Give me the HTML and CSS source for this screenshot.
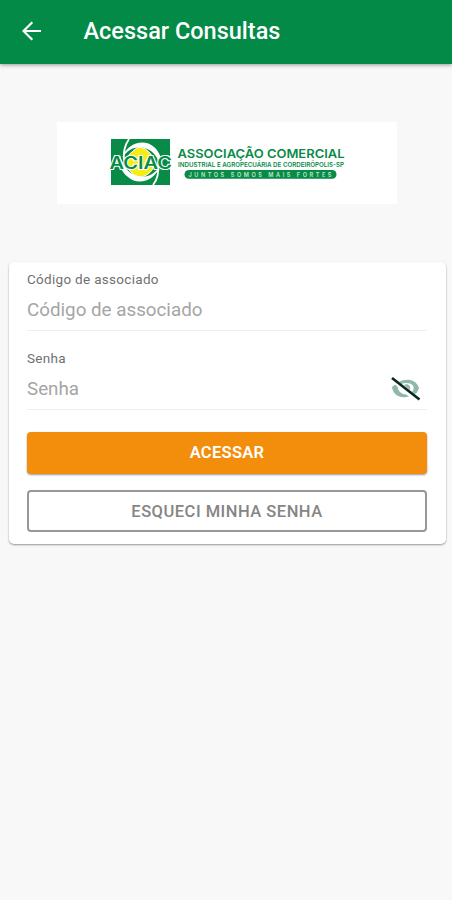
FILE: index.html
```
<!DOCTYPE html>
<html lang="pt-BR">

<head>
    <meta charset="utf-8">
    <title>Acessar Consultas</title>
    <link rel="stylesheet" href="styles.css">
</head>

<body>
    <header class="toolbar">
        <a class="back" href="#" aria-label="Voltar">
            <svg width="20" height="20" viewBox="0 0 20 20">
                <path d="M19 10H2M10.3 1.2L1.5 10l8.8 8.8" />
            </svg>
        </a>
        <h1>Acessar Consultas</h1>
    </header>

    <main>
        <div class="logo">
            <svg width="340" height="82" viewBox="57 122 340 82">
                <rect class="green" x="111" y="139" width="59" height="46" />
                <path class="yellow" d="M140 147Q146 148 150 153Q155 158 155 163Q153 171 148 174Q143 178 139 177Q133 176 130 171Q125 166 126 161Q128 154 133 151Q137 147 140 147z" />
                <path class="swirl" d="M129 139C125 145 123 152 124 160M153 185C158 179 159 172 158 164" />
                <path class="crescent" d="M122 158C127 143 144 138 154 147C160 152 163 161 161 169C158 158 154 151 146 148.500C137 145 128 149 122 158z" />
                <path class="crescent" d="M160 166C155 181 138 186 128 177C121 172 118 163 120 155C123 166 128 173 136 175.500C145 179 154 175 160 166z" />
                <text class="acronym" x="109.500" y="168.500" textLength="62.500" lengthAdjust="spacingAndGlyphs">ACIAC</text>
                <text class="name" x="177.500" y="158" textLength="167" lengthAdjust="spacingAndGlyphs">ASSOCIAÇÃO COMERCIAL</text>
                <text class="detail" x="178" y="167" textLength="166" lengthAdjust="spacingAndGlyphs">INDUSTRIAL E AGROPECUÁRIA DE CORDEIRÓPOLIS-SP</text>
                <rect class="green" x="184.500" y="170" width="152" height="8.800" rx="4.400" />
                <text class="motto" x="188.500" y="176.500" textLength="143" lengthAdjust="spacing">JUNTOS SOMOS MAIS FORTES</text>
            </svg>
        </div>

        <form class="card">
            <label for="codigo">Código de associado</label>
            <div class="field">
                <input type="text" id="codigo" placeholder="Código de associado">
            </div>

            <label for="senha">Senha</label>
            <div class="field">
                <input type="password" id="senha" placeholder="Senha">
                <svg class="eye" width="32" height="26" viewBox="0 0 32 26">
                    <path d="M2 11C3 19 10 23 19 20.500L16 18.500C11 18 8 15 7.500 10.500L5 8.500z" />
                    <path d="M9 6C16 2 26 3 29 12C28 15 27 17 25 18L22 16C25 13 24 9 20 7.500C17 6.500 13 7 12 8z" />
                    <path d="M14 9c4-2 7 1 6 5z" />
                    <line x1="2" y1="2" x2="29.500" y2="23.500" />
                </svg>
            </div>

            <button type="button" class="primary">ACESSAR</button>
            <button type="button" class="outline">ESQUECI MINHA SENHA</button>
        </form>
    </main>
</body>

</html>
```
FILE: styles.css
```
* {
    box-sizing: border-box;
}

body {
    margin: 0;
    min-height: 900px;
    background: #f8f8f8;
    font-family: Roboto, sans-serif;
}

.toolbar {
    display: flex;
    align-items: center;
    height: 64px;
    padding: 0 22px 2px;
    background: #028a46;
    box-shadow: 0 1px 4px rgba(0, 0, 0, 0.4);
    color: #fff;
}

.back {
    display: flex;
    margin-right: 41.5px;
}

.back path {
    fill: none;
    stroke: #fff;
    stroke-width: 2.2;
}

h1 {
    margin: 0;
    font-size: 23.5px;
    font-weight: 500;
}

.logo {
    width: 340px;
    height: 82px;
    margin: 58px 0 58px 57px;
    background: #fff;
}

.logo svg {
    display: block;
}

.logo text {
    font-family: Inter, sans-serif;
}

.green {
    fill: #078b46;
}

.yellow {
    fill: #f7ec13;
    stroke: #fff;
    stroke-width: 1;
}

.swirl {
    fill: none;
    stroke: #fff;
    stroke-width: 1.8;
}

.crescent {
    fill: #fff;
}

.acronym {
    fill: #078b46;
    stroke: #fff;
    stroke-width: 2px;
    paint-order: stroke;
    font-size: 17px;
    font-weight: 600;
}

.name {
    fill: #078b46;
    font-size: 12px;
    font-weight: 600;
}

.detail {
    fill: #078b46;
    font-size: 6px;
    font-weight: 600;
}

.motto {
    fill: #c4e4d1;
    font-size: 5.6px;
    font-weight: 600;
}

.card {
    width: 437px;
    height: 282px;
    margin-left: 9px;
    padding: 8px 19px 0 18px;
    border-radius: 5px;
    background: #fff;
    box-shadow: 0 1px 2px rgba(0, 0, 0, 0.4);
}

label {
    display: block;
    height: 19px;
    color: #707070;
    font-size: 13.5px;
    line-height: 18px;
    letter-spacing: 0.3px;
}

.field {
    display: flex;
    align-items: center;
    height: 42px;
    margin-bottom: 18px;
    border-bottom: 1px solid #efefef;
}

input {
    flex: 1;
    min-width: 0;
    padding: 1px 0 0;
    border: 0;
    outline: 0;
    background: none;
    font-family: inherit;
    font-size: 18.8px;
}

input::placeholder {
    color: #a5a5a5;
}

.eye {
    margin-right: 5px;
    fill: #90b8a8;
}

.eye line {
    stroke: #06291b;
    stroke-width: 2.6;
}

button {
    display: block;
    width: 100%;
    height: 42px;
    padding: 0;
    border: 0;
    border-radius: 4px;
    font-family: inherit;
    font-size: 16.5px;
    font-weight: 500;
}

.primary {
    margin: 22px 0 16px;
    padding-bottom: 1px;
    background: #f38e0d;
    box-shadow: 0 1px 2px rgba(0, 0, 0, 0.4);
    color: #fff;
    font-weight: 600;
    letter-spacing: 0.3px;
}

.outline {
    border: 2px solid #989898;
    background: #fff;
    color: #858585;
    letter-spacing: 0.5px;
}
```
